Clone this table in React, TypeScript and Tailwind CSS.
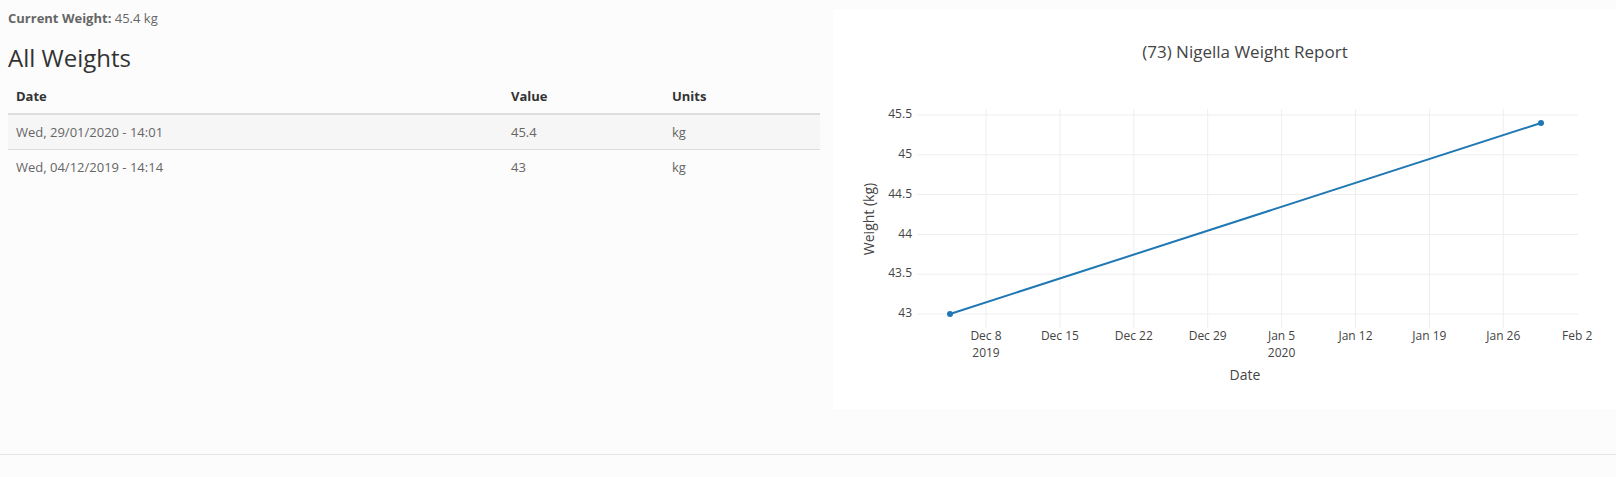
import React from 'react';

type WeightRow = { date: string; value: string; units: string };

const rows: WeightRow[] = [
  { date: 'Wed, 29/01/2020 - 14:01', value: '45.4', units: 'kg' },
  { date: 'Wed, 04/12/2019 - 14:14', value: '43', units: 'kg' },
];

// plot geometry (relative to the white chart panel)
const plotLeft = 84;
const plotRight = 745;
const plotTop = 100;
const plotBottom = 319;
const yFor = (v: number) => 305 - (v - 43) * 79.6;

const yTicks = [45.5, 45, 44.5, 44, 43.5, 43];
const xTicks = [
  { x: 153, label: 'Dec 8', year: '2019' },
  { x: 226.9, label: 'Dec 15' },
  { x: 300.8, label: 'Dec 22' },
  { x: 374.7, label: 'Dec 29' },
  { x: 448.6, label: 'Jan 5', year: '2020' },
  { x: 522.5, label: 'Jan 12' },
  { x: 596.4, label: 'Jan 19' },
  { x: 670.3, label: 'Jan 26' },
  { x: 744.2, label: 'Feb 2' },
];

const points = [
  { x: 117, y: yFor(43) },
  { x: 708, y: yFor(45.4) },
];

const WeightChart: React.FC = () => (
  <svg width="783" height="400" viewBox="0 0 783 400" style={{ fontFamily: '"Open Sans", "Liberation Sans", sans-serif' }}>
    {/* Titre */}
    <text x="412" y="44" textAnchor="middle" dominantBaseline="middle" fontSize="17" fill="#444">
      (73) Nigella Weight Report
    </text>

    {/* Grille */}
    {yTicks.map((t) => (
      <line key={t} x1={plotLeft} x2={plotRight} y1={yFor(t)} y2={yFor(t)} stroke="#eeeeee" strokeWidth="1" />
    ))}
    {xTicks.slice(0, 8).map((t) => (
      <line key={t.label} x1={t.x} x2={t.x} y1={plotTop} y2={plotBottom} stroke="#eeeeee" strokeWidth="1" />
    ))}

    {/* Axe Y */}
    {yTicks.map((t) => (
      <text key={t} x="79" y={yFor(t)} textAnchor="end" dominantBaseline="middle" fontSize="12" fill="#444">
        {t}
      </text>
    ))}
    <text
      x="37"
      y="210"
      textAnchor="middle"
      dominantBaseline="middle"
      fontSize="14"
      fill="#444"
      transform="rotate(-90 37 210)"
    >
      Weight (kg)
    </text>

    {/* Axe X */}
    {xTicks.map((t) => (
      <g key={t.label}>
        <text x={t.x} y="328" textAnchor="middle" dominantBaseline="middle" fontSize="12" fill="#444">
          {t.label}
        </text>
        {t.year && (
          <text x={t.x} y="345" textAnchor="middle" dominantBaseline="middle" fontSize="12" fill="#444">
            {t.year}
          </text>
        )}
      </g>
    ))}
    <text x="412" y="367" textAnchor="middle" dominantBaseline="middle" fontSize="14" fill="#444">
      Date
    </text>

    {/* Série */}
    <polyline
      points={points.map((p) => `${p.x},${p.y}`).join(' ')}
      fill="none"
      stroke="#1f77b4"
      strokeWidth="2"
    />
    {points.map((p, i) => (
      <circle key={i} cx={p.x} cy={p.y} r="3" fill="#1f77b4" />
    ))}
  </svg>
);

const App: React.FC = () => {
  return (
    <div
      className="min-h-[477px] bg-[#fcfcfc] text-[13px] text-[#666]"
      style={{ fontFamily: '"Open Sans", "Liberation Sans", sans-serif' }}
    >
      <div className="flex">
        {/* Colonne gauche */}
        <div className="w-[820px] pl-2 pt-[9px]">
          <p className="leading-[18px]">
            <span className="font-bold">Current Weight:</span> 45.4 kg
          </p>
          <h3 className="mt-[18px] text-[24px] leading-[26px] text-[#333]">All Weights</h3>
          <table className="mt-2 w-[812px] border-collapse text-left">
            <thead>
              <tr className="border-b-2 border-[#dddddd]">
                <th className="w-[495px] px-2 py-2 font-bold leading-[18px] text-[#333]">Date</th>
                <th className="w-[161px] px-2 py-2 font-bold leading-[18px] text-[#333]">Value</th>
                <th className="px-2 py-2 font-bold leading-[18px] text-[#333]">Units</th>
              </tr>
            </thead>
            <tbody>
              {rows.map((row, i) => (
                <tr key={row.date} className={i === 0 ? 'bg-[#f6f6f6]' : 'border-t border-[#dddddd]'}>
                  <td className="px-2 py-2 leading-[18px]">{row.date}</td>
                  <td className="px-2 py-2 leading-[18px]">{row.value}</td>
                  <td className="px-2 py-2 leading-[18px]">{row.units}</td>
                </tr>
              ))}
            </tbody>
          </table>
        </div>

        {/* Graphique */}
        <div className="ml-[13px] mt-[9px] h-[400px] flex-1 bg-white">
          <WeightChart />
        </div>
      </div>

      {/* Pied de page */}
      <div className="mt-[45px] h-[23px] border-t border-[#e5e5e5]" />
    </div>
  );
};

export default App;
